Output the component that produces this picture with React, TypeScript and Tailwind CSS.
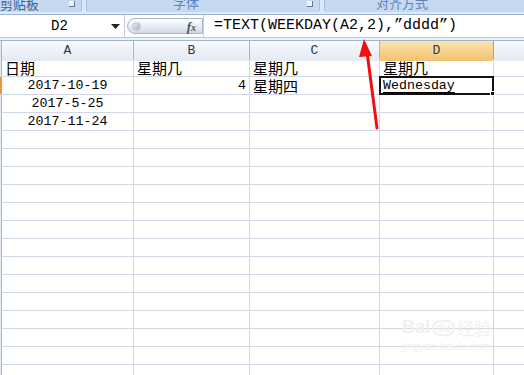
const cjk = '"Noto Sans CJK SC", sans-serif';
const mono = '"Liberation Mono", "Noto Sans CJK SC", monospace';

type Cell = { text?: string; align?: 'left' | 'center' | 'right'; latin?: boolean; selected?: boolean };

const rows: Cell[][] = [
  [{ text: '日期' }, { text: '星期几' }, { text: '星期几' }, { text: '星期几' }],
  [
    { text: '2017-10-19', align: 'center', latin: true },
    { text: '4', align: 'right', latin: true },
    { text: '星期四' },
    { text: 'Wednesday', latin: true, selected: true },
  ],
  [{ text: '2017-5-25', align: 'center', latin: true }, {}, {}, {}],
  [{ text: '2017-11-24', align: 'center', latin: true }, {}, {}, {}],
];

const cols = ['A', 'B', 'C', 'D'];
const grid = 'grid grid-cols-[2px_132px_116px_130px_114px_1fr]';

function Launcher() {
  return (
    <div className="w-[6px] h-[6px] border-r border-b border-[#5b7aa5] bg-white/70 mt-[1px]" />
  );
}

export default function App() {
  const blank = Array.from({ length: 14 });
  return (
    <div className="w-[524px] h-[375px] overflow-hidden bg-white relative" style={{ fontFamily: cjk }}>
      {/* ribbon group labels */}
      <div className="h-[12px] flex bg-[#dbe7f5] overflow-hidden">
        <div className="w-[82px] shrink-0 bg-[#c6d9f1] rounded-br-[3px] border-r border-[#a7bfdf] flex items-start justify-between pr-[6px]">
          <span className="text-[13px] leading-none -mt-[3px] text-[#3b5f92]">剪贴板</span>
          <Launcher />
        </div>
        <div className="w-[4px] shrink-0" />
        <div className="w-[234px] shrink-0 bg-[#c6d9f1] rounded-b-[3px] border-x border-[#a7bfdf] flex items-start justify-between pl-[86px] pr-[6px]">
          <span className="text-[13px] leading-none -mt-[4px] text-[#5b84c0]">字体</span>
          <Launcher />
        </div>
        <div className="w-[4px] shrink-0" />
        <div className="flex-1 bg-[#c6d9f1] rounded-bl-[3px] border-l border-[#a7bfdf] flex items-start pl-[51px]">
          <span className="text-[13px] leading-none -mt-[4px] text-[#5b84c0]">对齐方式</span>
        </div>
      </div>
      <div className="h-[3px] bg-[#dfeaf7] border-b border-[#9db3d1]" />

      {/* formula bar */}
      <div className="h-[23px] flex bg-white border-b border-[#b7c6dc]">
        <div className="w-[125px] shrink-0 flex items-center border-r border-[#c5d1e2]">
          <span className="flex-1 text-center text-[14px] pl-[8px] text-black" style={{ fontFamily: mono }}>D2</span>
          <svg width="9" height="5" viewBox="0 0 9 5" className="mr-[4px]">
            <path d="M0 0h9L4.5 5z" fill="#222" />
          </svg>
        </div>
        <div className="w-[78px] shrink-0 flex items-center py-[3px] pl-[2px]">
          <div className="h-full flex-1 rounded-l-full border border-[#a6b6cc] bg-gradient-to-b from-[#ffffff] via-[#e8eef6] to-[#cfd9e8] flex items-center justify-between pl-[4px] pr-[6px]">
            <div className="w-[9px] h-[9px] rounded-full bg-gradient-to-br from-[#e9edf2] to-[#a8b1bd] border border-[#c0c8d2]" />
            <span className="text-[13px] italic font-bold text-[#4b5563] leading-none" style={{ fontFamily: '"Liberation Serif", serif' }}>
              f<span className="text-[10px]">x</span>
            </span>
          </div>
        </div>
        <div className="flex-1 flex items-center pl-[10px] border-l border-[#c5d1e2]">
          <span className="text-[15px] text-black whitespace-pre" style={{ fontFamily: mono }}>
            =TEXT(WEEKDAY(A2,2),”dddd”)
          </span>
        </div>
      </div>
      <div className="h-[3px] bg-[#eef3fa] border-b border-[#9eb6ce]" />

      {/* column headers */}
      <div className={`${grid} h-[18px] border-b border-[#9eb6ce]`}>
        <div className="bg-[#dfe8f3] border-r border-[#9eb6ce]" />
        {cols.map((c) => (
          <div
            key={c}
            className={
              c === 'D'
                ? 'flex items-center justify-center bg-gradient-to-b from-[#fbe2b0] to-[#f2c46e] border-r border-[#f29536] text-[13px] text-[#1f3b53]'
                : 'flex items-center justify-center bg-gradient-to-b from-[#f8fafd] to-[#e3eaf4] border-r border-[#9eb6ce] text-[13px] text-[#1f3b53]'
            }
            style={{ fontFamily: mono }}
          >
            {c}
          </div>
        ))}
        <div className="bg-gradient-to-b from-[#f8fafd] to-[#e3eaf4]" />
      </div>

      {/* data rows */}
      {rows.map((r, i) => (
        <div key={i} className={`${grid} h-[18px] border-b border-[#d0d7e5]`}>
          <div className={i === 1 ? 'bg-[#f2c46e] border-r-2 border-[#f29536]' : 'bg-[#e4ecf7] border-r border-[#9eb6ce]'} />
          {r.map((cell, j) => (
            <div
              key={j}
              className={
                cell.selected
                  ? 'relative -my-[1px] -ml-[1px] border-2 border-[#111] flex items-center pl-[2px] z-10'
                  : `flex items-center border-r border-[#d0d7e5] px-[3px] ${
                      cell.align === 'center' ? 'justify-center' : cell.align === 'right' ? 'justify-end' : 'justify-start'
                    }`
              }
            >
              {cell.text && (
                <span
                  className={cell.latin ? `text-[13.3px] leading-none text-black ${cell.selected ? 'underline underline-offset-[3px]' : ''}` : 'text-[15px] leading-none text-black'}
                  style={{ fontFamily: cell.latin ? mono : cjk }}
                >
                  {cell.text}
                </span>
              )}
              {cell.selected && (
                <div className="absolute -right-[3px] -bottom-[3px] w-[5px] h-[5px] bg-[#111] border border-white" />
              )}
            </div>
          ))}
          <div />
        </div>
      ))}
      {blank.map((_, i) => (
        <div key={`b${i}`} className={`${grid} h-[18px] border-b border-[#d0d7e5]`}>
          <div className="bg-[#e4ecf7] border-r border-[#9eb6ce]" />
          <div className="border-r border-[#d0d7e5]" />
          <div className="border-r border-[#d0d7e5]" />
          <div className="border-r border-[#d0d7e5]" />
          <div className="border-r border-[#d0d7e5]" />
          <div />
        </div>
      ))}

      {/* watermark */}
      <div className="absolute left-[402px] top-[318px] flex flex-col items-center text-[#f0f0f0] pointer-events-none">
        <div className="flex items-end gap-[2px] leading-none">
          <span className="text-[18px] font-bold" style={{ fontFamily: '"Liberation Sans", sans-serif' }}>Bai</span>
          <span className="text-[12px] font-bold rounded-full border-2 border-[#f0f0f0] px-[2px]" style={{ fontFamily: '"Liberation Sans", sans-serif' }}>du</span>
          <span className="text-[17px]">经验</span>
        </div>
        <span className="text-[11px] mt-[2px]" style={{ fontFamily: '"Liberation Sans", sans-serif' }}>jingyan.baidu.com</span>
      </div>

      {/* red arrow */}
      <svg className="absolute inset-0 pointer-events-none" width="524" height="375">
        <line x1="377" y1="128" x2="367" y2="52" stroke="#f01010" strokeWidth="3" strokeLinecap="round" />
        <polygon points="364,39 372,56 359,57" fill="#f01010" />
      </svg>
    </div>
  );
}
